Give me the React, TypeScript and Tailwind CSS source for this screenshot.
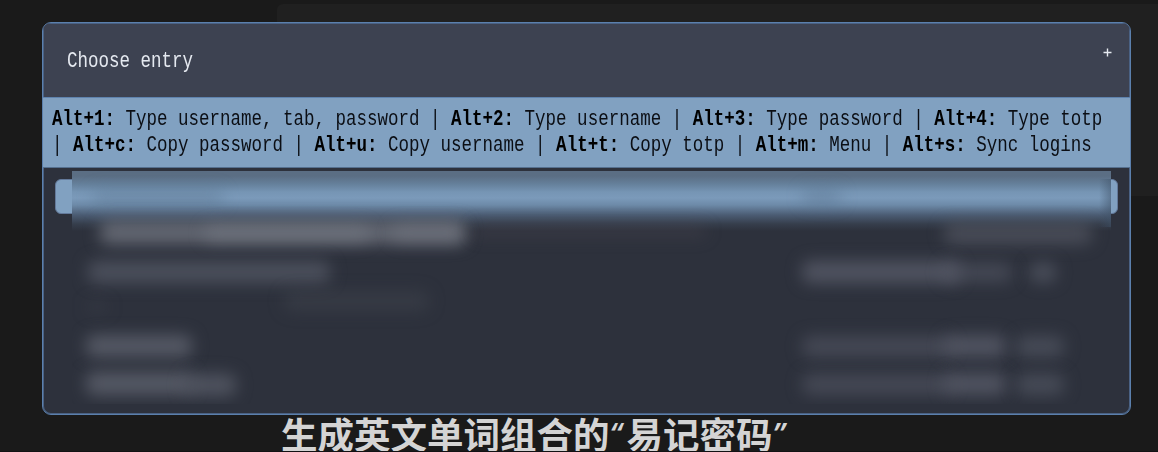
import type { ReactNode } from "react";

function Mono({ children, className = "" }: { children: ReactNode; className?: string }) {
  return (
    <div
      className={`origin-left scale-x-[0.7955] whitespace-pre font-['Liberation_Mono',monospace] text-[22px] ${className}`}
    >
      {children}
    </div>
  );
}

const shortcuts = [
  [
    ["Alt+1:", " Type username, tab, password | "],
    ["Alt+2:", " Type username | "],
    ["Alt+3:", " Type password | "],
    ["Alt+4:", " Type totp"],
  ],
  [
    ["", "| "],
    ["Alt+c:", " Copy password | "],
    ["Alt+u:", " Copy username | "],
    ["Alt+t:", " Copy totp | "],
    ["Alt+m:", " Menu | "],
    ["Alt+s:", " Sync logins"],
  ],
];

const smudges = [
  "left-[20px] top-[18px] w-[132px] h-[18px] bg-[#526c86]/35",
  "left-[730px] top-[18px] w-[40px] h-[16px] bg-[#526c86]/40",
  "left-[28px] top-[50px] w-[366px] h-[23px] bg-[#777b86]/75",
  "left-[132px] top-[54px] w-[166px] h-[17px] bg-[#80848f]/40",
  "left-[320px] top-[52px] w-[72px] h-[20px] bg-[#80848f]/30",
  "left-[400px] top-[54px] w-[235px] h-[12px] bg-[#55515b]/30",
  "left-[872px] top-[52px] w-[148px] h-[21px] bg-[#5b5f6b]/60",
  "left-[16px] top-[90px] w-[242px] h-[22px] bg-[#595d69]/70",
  "left-[730px] top-[90px] w-[158px] h-[22px] bg-[#5f6370]/70",
  "left-[870px] top-[92px] w-[70px] h-[19px] bg-[#555965]/60",
  "left-[958px] top-[92px] w-[26px] h-[19px] bg-[#595d69]/70",
  "left-[212px] top-[120px] w-[145px] h-[20px] bg-[#43464f]/45",
  "left-[14px] top-[130px] w-[22px] h-[12px] bg-[#454852]/30",
  "left-[14px] top-[164px] w-[106px] h-[22px] bg-[#636773]/75",
  "left-[730px] top-[165px] w-[150px] h-[21px] bg-[#555965]/60",
  "left-[872px] top-[164px] w-[62px] h-[22px] bg-[#5f6370]/70",
  "left-[944px] top-[165px] w-[48px] h-[21px] bg-[#555965]/65",
  "left-[14px] top-[201px] w-[106px] h-[23px] bg-[#636773]/75",
  "left-[112px] top-[203px] w-[52px] h-[22px] bg-[#5b5f6b]/75",
  "left-[730px] top-[203px] w-[150px] h-[21px] bg-[#555965]/60",
  "left-[872px] top-[202px] w-[62px] h-[22px] bg-[#5f6370]/70",
  "left-[944px] top-[203px] w-[48px] h-[21px] bg-[#555965]/65",
];

export default function App() {
  return (
    <div className="relative h-[452px] w-[1158px] overflow-hidden bg-[#1a1a1a]">
      <div className="absolute left-[277px] top-[4px] h-[192px] w-[881px] rounded-l-[6px] bg-[#202020]" />
      <div className="relative ml-[42px] pt-[22px]">
        <main className="flex h-[393px] w-[1089px] flex-col overflow-hidden rounded-[9px] border border-[#5b80ad] bg-[#2d313c] shadow-[inset_0_0_0_1px_#4a6183]">
          <header className="flex h-[74px] shrink-0 items-start justify-between bg-[#3d4251] pl-6 pr-[16px] text-[#e5e9f0] shadow-[inset_0_1px_0_#4a6183,inset_1px_0_0_#4a6183,inset_-1px_0_0_#4a6183]">
            <Mono className="mt-[26px] w-[190px] leading-[26px]">Choose entry</Mono>
            <span className="mt-[19px] flex h-[20px] w-[13px] items-center justify-center">
              <svg width="9" height="9" viewBox="0 0 9 9" fill="none" stroke="#e5e9f0" strokeWidth="1.4">
                <path d="M4.5 .5v8M.5 4.5h8" />
              </svg>
            </span>
          </header>
          <section className="-mx-px h-[71px] shrink-0 border-b border-t border-b-[#55708f] border-t-[#5f83ae] bg-[#81a1c1] pl-[10px] pt-[9px] text-[#0b0e14]">
            {shortcuts.map((line, row) => (
              <Mono key={row} className="w-[1340px] leading-[25.5px]">
                {line.map(([key, action]) => (
                  <span key={key + action}>
                    <b className="font-bold text-black">{key}</b>
                    {action}
                  </span>
                ))}
              </Mono>
            ))}
          </section>
          <section className="relative grow">
            <div className="absolute left-[12px] top-[11px] h-[35px] w-[1063px] rounded-[6px] border border-[#63799a] bg-[#81a1c1]" />
            <div className="absolute left-[29px] top-[3px] h-[233px] w-[1039px] overflow-hidden bg-[linear-gradient(to_bottom,#5b6e84_0px,#5b6e84_5px,#65809b_13px,#7695b4_21px,#7b9aba_27px,#6d8aa8_34px,#4b5c73_44px,#363e4c_53px,#2d313c_60px)]">
              {smudges.map((smudge) => (
                <div key={smudge} className={`absolute rounded-[8px] blur-[8px] ${smudge}`} />
              ))}
              <div className="absolute right-0 top-[8px] h-[48px] w-[12px] bg-linear-to-r from-transparent to-[#3f5268]/50" />
            </div>
          </section>
        </main>
      </div>
      <p className="relative ml-[281px] flex h-[37px] items-center whitespace-nowrap font-['Noto_Sans_CJK_SC',sans-serif] text-[36.5px] font-bold leading-[37px] text-[#d4d4d4]">
        <span>生成英文单词组合的</span>
        <span className="w-[17px] font-['Open_Sans',sans-serif] text-[31px] font-semibold italic">“</span>
        <span>易记密码</span>
        <span className="font-['Open_Sans',sans-serif] text-[31px] font-semibold italic">”</span>
      </p>
      <div className="absolute bottom-0 left-0 h-px w-full bg-[#121214]" />
    </div>
  );
}
